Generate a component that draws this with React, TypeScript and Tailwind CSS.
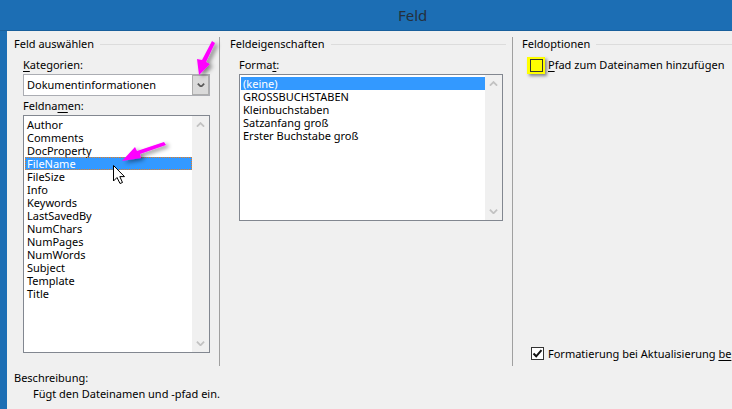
import React from 'react';

const font = { fontFamily: '"Noto Sans", "Open Sans", sans-serif' };

const Chevron: React.FC<{ up?: boolean; color?: string; size?: number; w?: number }> = ({
  up,
  color = '#c2c2c2',
  size = 9,
  w = 2,
}) => (
  <svg width={size} height={size * 0.6} viewBox="0 0 10 6">
    <polyline
      points={up ? '1,5.2 5,1.2 9,5.2' : '1,0.8 5,4.8 9,0.8'}
      fill="none"
      stroke={color}
      strokeWidth={w}
    />
  </svg>
);

const GroupHeader: React.FC<{ title: string; pl: string; mr: string }> = ({ title, pl, mr }) => (
  <div className={`flex items-center h-[14px] ${pl} ${mr}`}>
    <span className="text-[11px] leading-[14px] text-black whitespace-nowrap">{title}</span>
    <div className="flex-1 h-px bg-[#dcdcdc] ml-[6px]" />
  </div>
);

const ListBox: React.FC<{
  items: string[];
  selected: number;
  focus?: boolean;
  className: string;
}> = ({ items, selected, focus, className }) => (
  <div className={`flex bg-white border border-[#828790] ${className}`}>
    <div className="flex-1 pt-[2px] pl-px">
      {items.map((it, i) => (
        <div
          key={it}
          className={`h-[13px] leading-[13px] text-[11px] pl-[2px] whitespace-nowrap ${
            i === selected
              ? `bg-[#3399ff] text-white ${focus ? 'outline outline-1 outline-dotted outline-[#e67e22] -outline-offset-1' : ''}`
              : 'text-black'
          }`}
        >
          {it}
        </div>
      ))}
    </div>
    <div className="w-[17px] bg-[#f0f0f0] flex flex-col items-center justify-between py-[6px]">
      <Chevron up />
      <Chevron />
    </div>
  </div>
);

export default function App() {
  return (
    <div style={font} className="w-[732px] h-[409px] bg-[#f0f0f0] flex flex-col overflow-hidden relative">
      <div className="h-[31px] bg-[#1c6eb4] border-b border-[#185f9c] flex items-center pl-[398px] shrink-0">
        <span className="text-[15px] text-[#24303d] leading-none">Feld</span>
      </div>
      <div className="flex flex-1">
        <div className="w-[7px] bg-[#1c6eb4] shrink-0" />
        <div className="flex-1 flex flex-col">
          <div className="flex h-[329px] mt-[6px]">
            {/* Feld auswählen */}
            <div className="w-[212px] flex flex-col">
              <GroupHeader title="Feld auswählen" pl="pl-[7px]" mr="mr-[4px]" />
              <div className="pl-[16px] pr-[9px] flex flex-col">
                <div className="text-[11px] leading-[14px] mt-[7px]">
                  <u className="underline-offset-2">K</u>ategorien:
                </div>
                <div className="mt-[2px] h-[22px] bg-white border border-[#abadb3] flex items-center">
                  <span className="flex-1 pl-[3px] text-[11px]">Dokumentinformationen</span>
                  <div className="w-[17px] h-[20px] bg-[#dadada] border border-[#adadad] flex items-center justify-center">
                    <Chevron color="#5a5a5a" size={8} w={2.2} />
                  </div>
                </div>
                <div className="text-[11px] leading-[14px] mt-[3px]">
                  Feldna<u className="underline-offset-2">m</u>en:
                </div>
                <ListBox
                  className="mt-[2px] h-[238px]"
                  selected={3}
                  focus
                  items={[
                    'Author',
                    'Comments',
                    'DocProperty',
                    'FileName',
                    'FileSize',
                    'Info',
                    'Keywords',
                    'LastSavedBy',
                    'NumChars',
                    'NumPages',
                    'NumWords',
                    'Subject',
                    'Template',
                    'Title',
                  ]}
                />
              </div>
            </div>
            <div className="w-px bg-[#a0a0a0]" />
            {/* Feldeigenschaften */}
            <div className="w-[292px] flex flex-col">
              <GroupHeader title="Feldeigenschaften" pl="pl-[10px]" mr="mr-[6px]" />
              <div className="pl-[19px] pr-[9px] flex flex-col">
                <div className="text-[11px] leading-[14px] mt-[7px]">
                  Forma<u className="underline-offset-2">t</u>:
                </div>
                <ListBox
                  className="mt-[2px] h-[147px]"
                  selected={0}
                  items={['(keine)', 'GROSSBUCHSTABEN', 'Kleinbuchstaben', 'Satzanfang groß', 'Erster Buchstabe groß']}
                />
              </div>
            </div>
            <div className="w-px bg-[#a0a0a0]" />
            {/* Feldoptionen */}
            <div className="flex-1 flex flex-col">
              <GroupHeader title="Feldoptionen" pl="pl-[9px]" mr="mr-0" />
              <div className="pl-[14px] flex items-center mt-[5px] h-[18px]">
                <div className="w-[18px] h-[17px] bg-[#ffff00] flex items-center justify-center shadow-[2px_2px_3px_rgba(0,0,0,0.45)]">
                  <div className="w-[13px] h-[13px] border border-[#333] bg-[#ffff00]" />
                </div>
                <span className="text-[11px] ml-[3px] whitespace-nowrap">
                  <u className="underline-offset-2">P</u>fad zum Dateinamen hinzufügen
                </span>
              </div>
              <div className="mt-auto mb-[4px] pl-[18px] flex items-center">
                <div className="w-[13px] h-[13px] border border-[#333] bg-white flex items-center justify-center">
                  <svg width="11" height="11" viewBox="0 0 11 11">
                    <polyline points="1.5,5.5 4.2,8.3 9.5,2.2" fill="none" stroke="#111" strokeWidth="2" />
                  </svg>
                </div>
                <span className="text-[11px] ml-[4px] whitespace-nowrap">
                  Formatierung bei Aktualisierung <u className="underline-offset-2">be</u>ibehalten
                </span>
              </div>
            </div>
          </div>
          <div className="pl-[7px] mt-[4px] text-[11px] leading-[16px]">Beschreibung:</div>
          <div className="pl-[26px] text-[11px] leading-[16px]">Fügt den Dateinamen und -pfad ein.</div>
        </div>
      </div>

      {/* annotations */}
      <svg className="absolute left-0 top-0 pointer-events-none" width="732" height="409">
        <defs>
          <filter id="sh" x="-50%" y="-50%" width="200%" height="200%">
            <feDropShadow dx="3" dy="2" stdDeviation="2" floodColor="#000" floodOpacity="0.45" />
          </filter>
        </defs>
        <g filter="url(#sh)" fill="#ff00ff">
          <polygon points="212,41 215,43 206,62 210,64 199,75 197,59 202,60" />
          <polygon points="164,142 166,145 140,154 141,158 122,161 135,147 137,151" />
        </g>
        <path
          d="M113.5,165.5 L113.5,181 L117,177.5 L120,183.5 L122.5,182.5 L119.8,176.6 L124.5,176.6 Z"
          fill="#fff"
          stroke="#000"
          strokeWidth="1"
        />
      </svg>
    </div>
  );
}
